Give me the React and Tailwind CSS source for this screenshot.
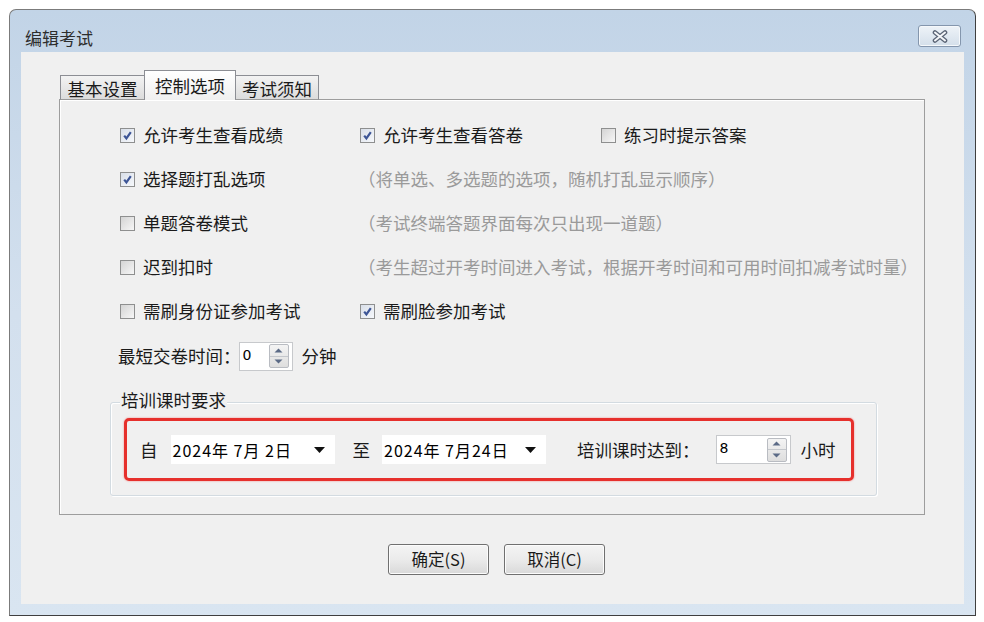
import React from "react";

const F = "font-['Noto_Sans_CJK_SC','Noto_Sans',sans-serif]";

function Check({ checked }) {
  return (
    <span
      className={
        "inline-flex w-[15px] h-[15px] border border-[#8e8f8f] items-center justify-center shrink-0 " +
        (checked
          ? "bg-gradient-to-br from-[#d9dfe9] to-[#f6f8fb]"
          : "bg-gradient-to-br from-[#d4d4d4] to-[#f7f7f7]")
      }
    >
      {checked && (
        <svg width="11" height="11" viewBox="0 0 11 11">
          <path d="M2.2 5.6 L4.4 8.4 L8.8 2.2" fill="none" stroke="#3d5596" strokeWidth="2.2" />
        </svg>
      )}
    </span>
  );
}

function CheckItem({ checked, label }) {
  return (
    <div className="flex items-center gap-[8px]">
      <Check checked={checked} />
      <span className="text-[17.5px] leading-none text-[#1a1a1a]">{label}</span>
    </div>
  );
}

function Hint({ children }) {
  return <span className="text-[17.5px] leading-none text-[#9a9a9a] whitespace-nowrap">{children}</span>;
}

function Spinner() {
  return (
    <div className="flex flex-col w-[20px] h-[24px] border border-[#b9bcc2] rounded-[2px] bg-gradient-to-b from-[#f4f4f4] to-[#dedede]">
      <div className="flex-1 flex items-center justify-center border-b border-[#c4c7cc]">
        <svg width="9" height="5" viewBox="0 0 9 5"><path d="M0.5 4.5 L4.5 0.5 L8.5 4.5 Z" fill="#5b6a86" /></svg>
      </div>
      <div className="flex-1 flex items-center justify-center">
        <svg width="9" height="5" viewBox="0 0 9 5"><path d="M0.5 0.5 L4.5 4.5 L8.5 0.5 Z" fill="#5b6a86" /></svg>
      </div>
    </div>
  );
}

function SpinBox({ value, width }) {
  return (
    <div
      className="flex items-center justify-between h-[29px] bg-white border border-[#c7c9cc] pl-[3px] pr-[3px]"
      style={{ width }}
    >
      <span className="font-['DejaVu_Sans',sans-serif] text-[14px] leading-none text-black self-start mt-[5px]">{value}</span>
      <Spinner />
    </div>
  );
}

function DateBox({ text }) {
  return (
    <div className="flex items-center justify-between w-[164px] h-[29px] bg-white pl-[2px] pr-[10px]">
      <span className="text-[16px] tracking-[1px] leading-none text-black whitespace-pre">{text}</span>
      <svg width="11" height="6" viewBox="0 0 11 6"><path d="M0 0 L11 0 L5.5 6 Z" fill="#111" /></svg>
    </div>
  );
}

function Btn({ children }) {
  return (
    <div className="flex items-center justify-center w-[101px] h-[31px] border border-[#707070] rounded-[3px] bg-gradient-to-b from-[#f4f4f4] via-[#ebebeb] to-[#d9d9d9] shadow-[inset_0_0_0_1px_#fcfcfc]">
      <span className="text-[16.5px] leading-none text-[#1a1a1a]">{children}</span>
    </div>
  );
}

export default function App() {
  return (
    <div className={"w-[984px] h-[622px] bg-white pl-[9px] pt-[9px] " + F}>
      <div className="w-[967px] h-[607px] flex flex-col rounded-t-[7px] border border-[#7b7b7b] border-r-[#3f3f3f] border-b-[#3f3f3f] bg-gradient-to-b from-[#c2d4e7] via-[#d3e0ee] to-[#d9e5f1] overflow-hidden">
        {/* title bar */}
        <div className="h-[42px] flex items-center justify-between pl-[15px] pr-[14px] shrink-0">
          <span className="text-[17px] leading-none text-[#2d2d2d] mt-[12px]">编辑考试</span>
          <div className="w-[43px] h-[22px] mt-[10px] flex items-center justify-center border border-[#8496ad] rounded-[3px] bg-gradient-to-b from-[#eef3f8] to-[#d4dfea] shadow-[inset_0_0_0_1px_#f5f8fb]">
            <svg width="18" height="13" viewBox="0 0 18 13">
              <path d="M4 2.5 L14 10.5 M14 2.5 L4 10.5" stroke="#5c6677" strokeWidth="4.6" strokeLinecap="round" />
              <path d="M4 2.5 L14 10.5 M14 2.5 L4 10.5" stroke="#f4f6f9" strokeWidth="2" strokeLinecap="round" />
            </svg>
          </div>
        </div>
        {/* client */}
        <div className="flex-1 mx-[11px] mb-[11px] bg-[#f0f0f0] flex flex-col pl-[38px] pt-[18px]">
          {/* tabs */}
          <div className="flex items-end h-[30px] relative z-10 -mb-px pl-px">
            <div className="w-[85px] h-[25px] flex items-center justify-center border border-[#8c8e94] border-b-[#9a9a9a] bg-gradient-to-b from-[#f3f3f3] to-[#dcdcdc]">
              <span className="text-[17.5px] leading-none text-[#1a1a1a] mt-[2px]">基本设置</span>
            </div>
            <div className="w-[92px] h-[30px] flex items-center justify-center border border-[#8c8e94] border-b-0 -ml-px bg-gradient-to-b from-[#ffffff] to-[#f0f0f0]">
              <span className="text-[17.5px] leading-none text-[#1a1a1a]">控制选项</span>
            </div>
            <div className="w-[84px] h-[25px] flex items-center justify-center border border-[#8c8e94] border-b-[#9a9a9a] -ml-px bg-gradient-to-b from-[#f3f3f3] to-[#dcdcdc]">
              <span className="text-[17.5px] leading-none text-[#1a1a1a] mt-[2px]">考试须知</span>
            </div>
          </div>
          {/* panel */}
          <div className="w-[866px] h-[416px] border border-[#9d9d9d] shadow-[inset_1px_1px_0_#ffffff] bg-[#f0f0f0] flex flex-col pt-[13px] pl-[50px]">
            <div className="flex flex-col pl-[10px]">
              <div className="h-[44px] flex items-center">
                <div className="w-[240px]"><CheckItem checked label="允许考生查看成绩" /></div>
                <div className="w-[241px]"><CheckItem checked label="允许考生查看答卷" /></div>
                <CheckItem label="练习时提示答案" />
              </div>
              <div className="h-[44px] flex items-center">
                <div className="w-[238px]"><CheckItem checked label="选择题打乱选项" /></div>
                <Hint>（将单选、多选题的选项，随机打乱显示顺序）</Hint>
              </div>
              <div className="h-[44px] flex items-center">
                <div className="w-[238px]"><CheckItem label="单题答卷模式" /></div>
                <Hint>（考试终端答题界面每次只出现一道题）</Hint>
              </div>
              <div className="h-[44px] flex items-center">
                <div className="w-[238px]"><CheckItem label="迟到扣时" /></div>
                <Hint>（考生超过开考时间进入考试，根据开考时间和可用时间扣减考试时量）</Hint>
              </div>
              <div className="h-[44px] flex items-center">
                <div className="w-[240px]"><CheckItem label="需刷身份证参加考试" /></div>
                <CheckItem checked label="需刷脸参加考试" />
              </div>
              <div className="h-[46px] flex items-center -ml-[2px]">
                <span className="text-[17.5px] leading-none text-[#1a1a1a]">最短交卷时间：</span>
                <div className="-ml-[2px]"><SpinBox value="0" width="54px" /></div>
                <span className="text-[17.5px] leading-none text-[#1a1a1a] ml-[9px]">分钟</span>
              </div>
            </div>
            {/* group box */}
            <div className="relative mt-[23px] w-[767px] h-[94px] border border-[#d3dbe1] rounded-[3px] shadow-[inset_1px_1px_0_#ffffff,1px_1px_0_#ffffff] pt-[15px] pl-[13px]">
              <span className="absolute -top-[12px] left-[9px] bg-[#f0f0f0] px-[1px] text-[17.5px] leading-none text-[#1a1a1a]">培训课时要求</span>
              <div className="w-[730px] h-[63px] border-[3px] border-[#e6302c] rounded-[5px] shadow-[0_0_2px_#f08080] flex items-center pl-[13px]">
                <span className="text-[17.5px] leading-none text-[#1a1a1a]">自</span>
                <div className="ml-[13px]"><DateBox text="2024年 7月 2日" /></div>
                <span className="text-[17.5px] leading-none text-[#1a1a1a] ml-[18px]">至</span>
                <div className="ml-[12px]"><DateBox text="2024年 7月24日" /></div>
                <span className="text-[17.5px] leading-none text-[#1a1a1a] ml-[31px]">培训课时达到：</span>
                <div className="ml-[16px]"><SpinBox value="8" width="75px" /></div>
                <span className="text-[17.5px] leading-none text-[#1a1a1a] ml-[10px]">小时</span>
              </div>
            </div>
          </div>
          {/* buttons */}
          <div className="flex items-center gap-[15px] pl-[329px] mt-[29px]">
            <Btn>确定(S)</Btn>
            <Btn>取消(C)</Btn>
          </div>
        </div>
      </div>
    </div>
  );
}
